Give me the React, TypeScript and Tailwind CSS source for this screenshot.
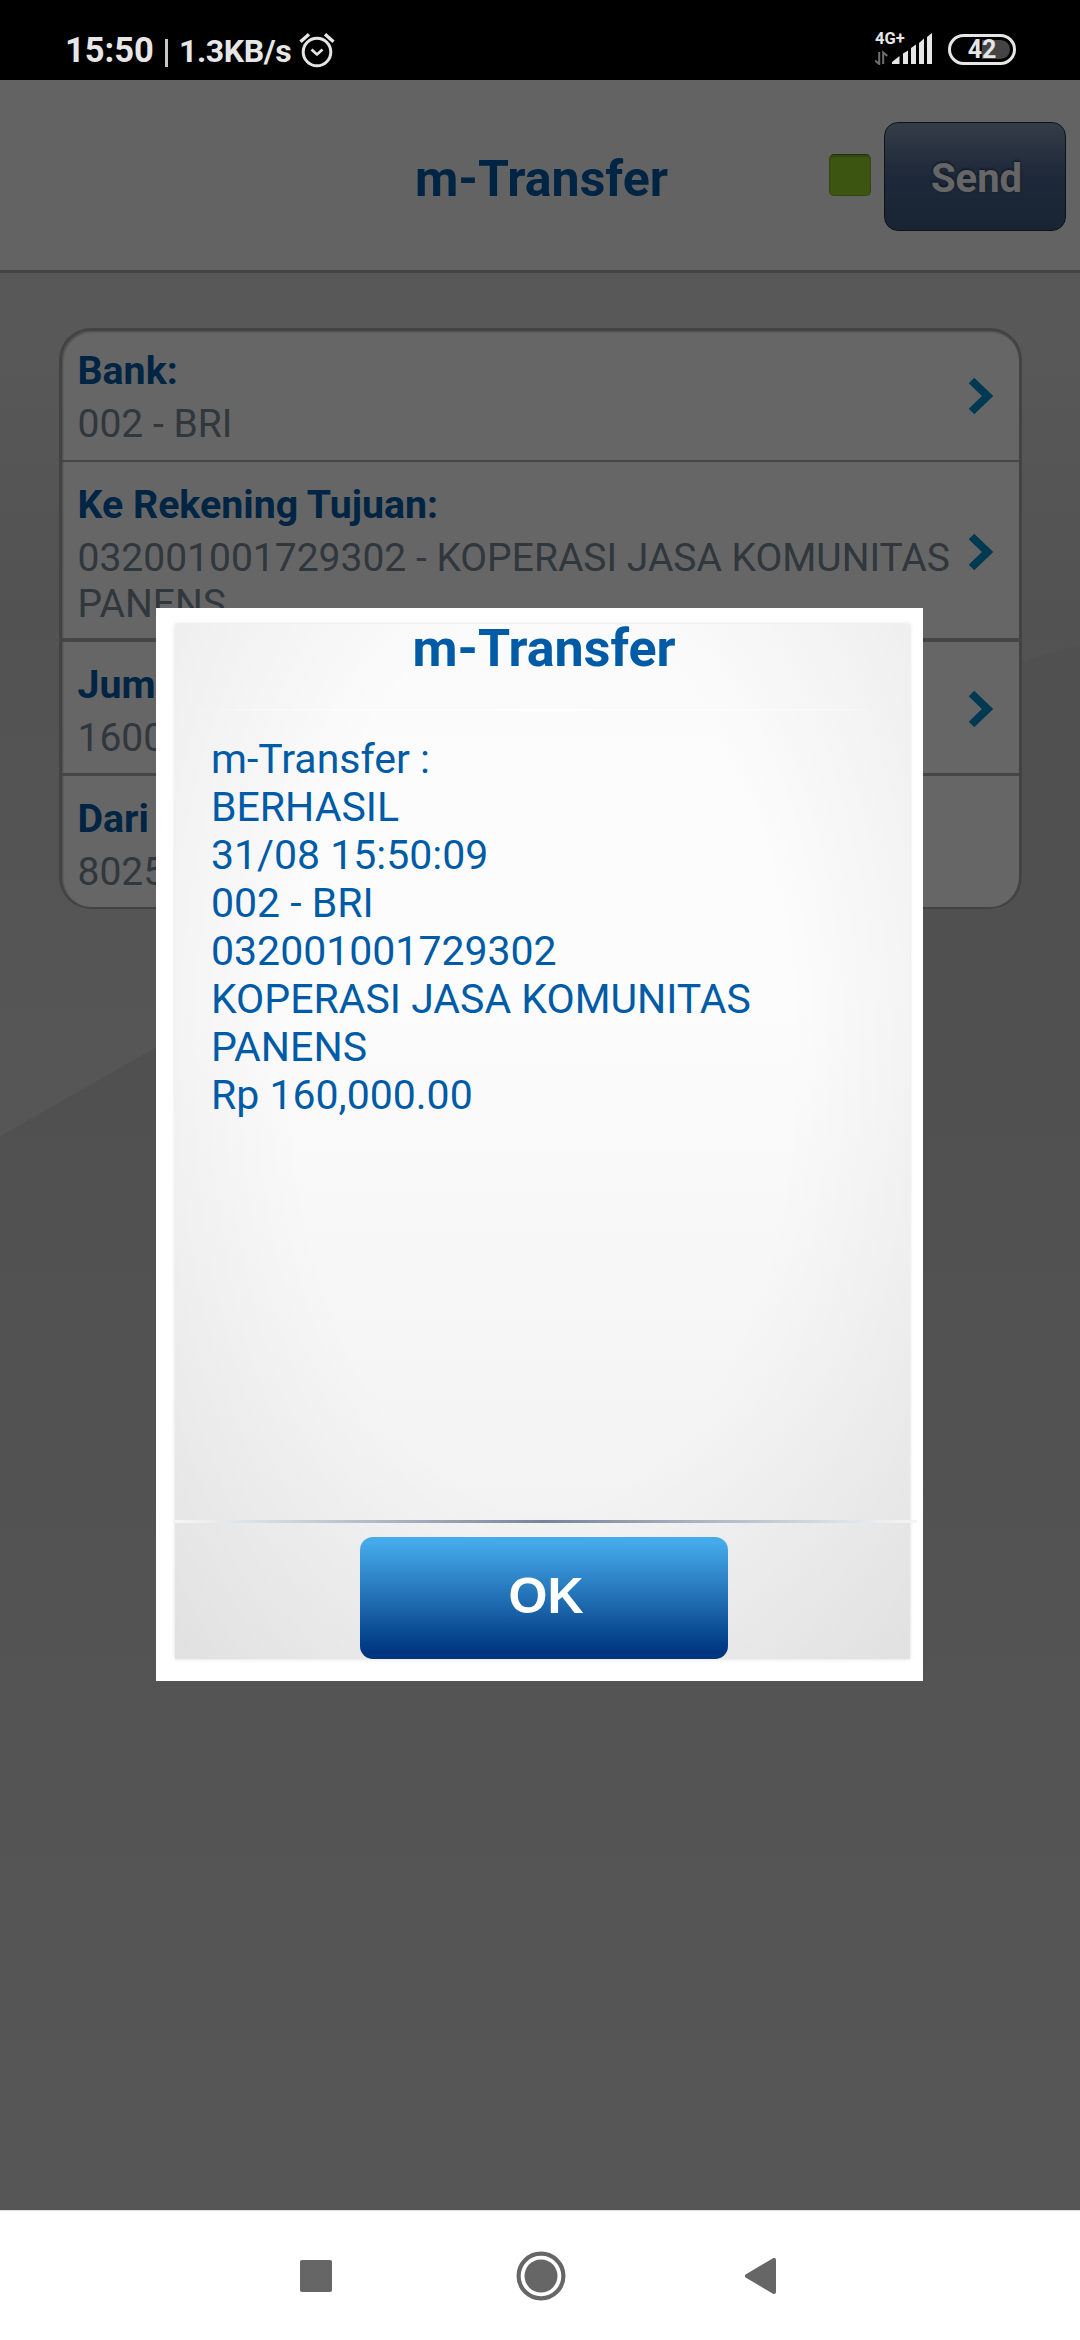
import React from 'react';

interface Field {
  label: string;
  lines: string[];
  chevron: boolean;
  className: string;
}

const FIELDS: Field[] = [
  { label: 'Bank:', lines: ['002 - BRI'], chevron: true, className: 'h-[131px] pt-[17px] border-b-2' },
  {
    label: 'Ke Rekening Tujuan:',
    lines: ['032001001729302 - KOPERASI JASA KOMUNITAS', 'PANENS'],
    chevron: true,
    className: 'h-[180px] pt-5 border-b-4',
  },
  { label: 'Jum', lines: ['1600'], chevron: true, className: 'h-[134px] pt-5 border-b-[3px]' },
  { label: 'Dari', lines: ['8025'], chevron: false, className: 'h-[131px] pt-5' },
];

const RESULT = [
  'm-Transfer :',
  'BERHASIL',
  '31/08 15:50:09',
  '002 - BRI',
  '032001001729302',
  'KOPERASI JASA KOMUNITAS',
  'PANENS',
  'Rp 160,000.00',
];

const AlarmIcon = () => (
  <svg width="36" height="36" viewBox="0 0 36 36" fill="none" stroke="#e6e6e6" strokeWidth="3">
    <circle cx="18" cy="20" r="13.8" />
    <path d="M12.5 17.5 L18 22.5 L23.5 17.5" strokeWidth="2.6" strokeLinejoin="round" />
    <path d="M1.5 9.8 L10 2.2 M34.5 9.8 L26 2.2" strokeWidth="3.4" />
  </svg>
);

const SignalIcon = () => (
  <svg width="57" height="33" viewBox="0 0 57 33">
    <g fill="#e6e6e6">
      <path d="M17 32 V30 L24.5 24 V32 Z" />
      <path d="M28 32 V21.5 L33 18.5 V32 Z" />
      <path d="M36 32 V16 L41 12.5 V32 Z" />
      <path d="M44 32 V11 L49 6.5 V32 Z" />
      <path d="M52 32 V5 L57 1 V32 Z" />
    </g>
    <path d="M4.2 20 V32 L0 28.5 M8.2 32 V20.5 L12.3 24" fill="none" stroke="#6f6f6f" strokeWidth="2" />
  </svg>
);

const StatusBar = () => (
  <div className="flex h-20 justify-between bg-black pl-[65px] pr-[64px] font-bold text-[#e6e6e6]">
    <div className="flex pt-[32px]">
      <span className="w-[100px] text-[34.5px] leading-9">15:50</span>
      <span className="mt-[7px] h-7 w-[3px] bg-[#c8c8c8]" />
      <span className="ml-[11px] w-[120px] text-[32px] leading-[38px] tracking-[-0.4px]">1.3KB/s</span>
      <AlarmIcon />
    </div>
    <div className="flex pt-8">
      <div className="relative mr-4 h-[33px] w-[57px]">
        <span className="absolute -top-px left-0 text-[16.5px] leading-4">4G+</span>
        <SignalIcon />
      </div>
      <div className="relative mt-[2px] flex h-[31px] w-[68px] items-center justify-center rounded-full border-[3px] border-[#e6e6e6]">
        <span className="absolute right-[3px] top-[3px] h-[19px] w-[28px] rounded-r-full bg-[#444]" />
        <span className="relative text-[25px] leading-6">42</span>
      </div>
    </div>
  </div>
);

const Header = () => (
  <header className="relative flex h-[193px] items-start justify-end border-b-[3px] border-[#aaa] bg-[#f8f8f8] pr-[14px]">
    <h1 className="absolute inset-x-0 top-[69px] pl-[3px] text-center text-[50px] font-bold leading-[60px] text-[#005ba7]">
      m-Transfer
    </h1>
    <span className="mt-[74px] h-[42px] w-[42px] rounded-[5px] border border-[#83b52b] border-t-[#597f1d] bg-[#96d42a] shadow-[inset_0_2px_1px_#7db01f]" />
    <button className="ml-[13px] mt-[42px] h-[109px] w-[182px] rounded-[14px] border border-[#223049] bg-linear-to-b from-[#8497af] via-[#4a6590] via-50% to-[#405a80] pl-[3px] pt-[5px] text-[40px] font-bold text-white [text-shadow:0_-1px_3px_#1c2b45]">
      Send
    </button>
  </header>
);

const Chevron = () => (
  <svg width="26" height="38" viewBox="0 0 26 38" fill="none" stroke="#0590cc" strokeWidth="8">
    <path d="M3.5 3.5 L19.5 19 L3.5 34.5" />
  </svg>
);

const Form = () => (
  <div className="relative mx-auto mt-[55px] h-[581px] w-[963px] overflow-hidden rounded-[32px] border-[3px] border-b-2 border-[#a8a8a8] bg-white shadow-[inset_1px_1px_2px_#bbb]">
    {FIELDS.map((field) => (
      <div key={field.label} className={`flex border-[#b0b0b0] pl-4 pr-[25px] ${field.className}`}>
        <div className="flex-1 whitespace-nowrap text-[39px] leading-[46px]">
          <div className="mb-[7px] text-[39.3px] font-bold text-[#005ba7]">{field.label}</div>
          {field.lines.map((line) => (
            <div key={line} className="text-[#788a99]">{line}</div>
          ))}
        </div>
        {field.chevron && (
          <div className="flex h-full items-center pb-[17px]">
            <Chevron />
          </div>
        )}
      </div>
    ))}
  </div>
);

const Dialog = () => (
  <div className="h-[1073px] w-[767px] bg-white pl-[19px] pr-[13px] pt-4">
    <div className="flex h-[1035px] w-[735px] flex-col bg-[radial-gradient(ellipse_75%_95%_at_50%_42%,#00000000_45%,#00000014_100%),linear-gradient(#fbfbfb,#fcfcfc_35%,#f0f0f0)] shadow-[0_0_4px_#ddd]">
      <h2 className="h-[85px] pl-[3px] pt-px text-center text-[52px] font-bold leading-[48px] text-[#005ba7]">m-Transfer</h2>
      <div className="h-[2px] bg-linear-to-r from-transparent via-white to-transparent" />
      <div className="h-[810px] pl-9 pt-[24px] text-[41px] leading-[48px] text-[#005ba7]">
        {RESULT.map((line) => (
          <div key={line}>{line}</div>
        ))}
      </div>
      <div className="h-[3px] w-[742px] bg-[linear-gradient(90deg,#f5f5f5,#eeeeee_4%,#dfe3ea_9%,#788496_50%,#dfe3ea_91%,#eeeeee_96%,#f5f5f5)]" />
      <button className="ml-[185px] mt-[14px] h-[122px] w-[368px] shrink-0 rounded-[13px] bg-linear-to-b from-[#45aaea] from-5% via-[#2270b5] via-50% to-[#003580] to-95% pb-[4px] pl-[4px] font-['Liberation_Sans',sans-serif] text-[50px] font-bold text-white">
        OK
      </button>
    </div>
  </div>
);

const NavBar = () => (
  <div className="flex h-[130px] items-center border-t border-[#ddd] bg-white pl-[300px]">
    <span className="size-8 rounded-[2px] bg-[#666]" />
    <svg className="ml-[184px]" width="50" height="50" viewBox="0 0 50 50">
      <circle cx="25" cy="25" r="22.4" fill="none" stroke="#666" strokeWidth="4.2" />
      <circle cx="25" cy="25" r="16.5" fill="#666" />
    </svg>
    <svg className="ml-[179px]" width="31" height="36" viewBox="0 0 31 36">
      <path d="M2 18 L29 2 V34 Z" fill="#666" stroke="#666" strokeWidth="4" strokeLinejoin="round" />
    </svg>
  </div>
);

export default function App() {
  return (
    <div className="h-[2340px] w-[1080px] overflow-hidden font-[Roboto,sans-serif]">
      <StatusBar />
      <main className="relative h-[2130px] bg-linear-to-b from-[#c8c8c8] from-45% to-[#d8d8d8]">
        {/* light diagonal sweep behind the form */}
        <div className="absolute inset-x-0 top-0 h-[1056px] bg-[linear-gradient(#dcdcdc_25%,#cecece_50%,#d8d8d8)] [clip-path:polygon(0_0,100%_0,100%_565px,82%_620px,45%_790px,14%_970px,0_1056px)]" />
        <Header />
        <Form />
        <div className="absolute inset-0 flex items-center justify-center bg-black/60 pb-px pr-px">
          <Dialog />
        </div>
      </main>
      <NavBar />
    </div>
  );
}
